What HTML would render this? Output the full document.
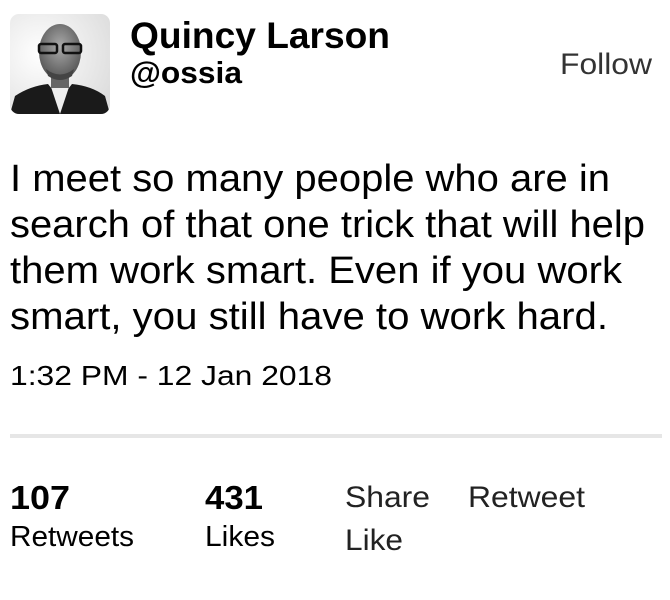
<!DOCTYPE html>
<html><head><style>
body{margin:0;background:#fff;font-family:"Liberation Sans",Arial,sans-serif;width:670px;height:600px;position:relative;overflow:hidden;color:#000}
.a{position:absolute}
</style></head><body>
<svg class="a" style="left:10px;top:14px" width="100" height="100" viewBox="0 0 100 100">
<defs><clipPath id="c"><rect width="100" height="100" rx="9"/></clipPath>
<radialGradient id="bg" cx="0.3" cy="0.4" r="0.8"><stop offset="0" stop-color="#fff"/><stop offset="1" stop-color="#ddd"/></radialGradient>
<radialGradient id="f" cx="0.5" cy="0.4" r="0.6"><stop offset="0" stop-color="#aaa"/><stop offset="1" stop-color="#555"/></radialGradient></defs>
<g clip-path="url(#c)">
<rect width="100" height="100" fill="url(#bg)"/>
<path d="M0 100 L5 82 Q20 72 38 70 L50 85 L62 70 Q82 72 95 82 L100 100Z" fill="#1a1a1a"/>
<path d="M40 70 L50 100 L60 70 Z" fill="#eee"/>
<rect x="41" y="58" width="18" height="16" fill="#666"/>
<ellipse cx="50" cy="38" rx="21" ry="28" fill="url(#f)"/>
<rect x="29" y="30" width="18" height="9" rx="2" fill="none" stroke="#111" stroke-width="2.5"/>
<rect x="53" y="30" width="18" height="9" rx="2" fill="none" stroke="#111" stroke-width="2.5"/>
<path d="M36 55 Q50 66 64 55 L62 62 Q50 70 38 62Z" fill="#444"/>
</g></svg>
<svg class="a" style="left:0;top:0" width="670" height="600" font-family="Liberation Sans, Arial, sans-serif">
<text x="130" y="48" font-size="37" font-weight="bold" textLength="260" lengthAdjust="spacingAndGlyphs">Quincy Larson</text>
<text x="130" y="83" font-size="31" font-weight="bold" textLength="112" lengthAdjust="spacingAndGlyphs">@ossia</text>
<text x="560" y="74" font-size="30" fill="#333" textLength="92" lengthAdjust="spacingAndGlyphs">Follow</text>
<g font-size="38">
<text x="10" y="191" textLength="600" lengthAdjust="spacingAndGlyphs">I meet so many people who are in</text>
<text x="10" y="237" textLength="635" lengthAdjust="spacingAndGlyphs">search of that one trick that will help</text>
<text x="10" y="283" textLength="612" lengthAdjust="spacingAndGlyphs">them work smart. Even if you work</text>
<text x="10" y="329" textLength="598" lengthAdjust="spacingAndGlyphs">smart, you still have to work hard.</text>
</g>
<text x="10" y="385" font-size="28" textLength="322" lengthAdjust="spacingAndGlyphs">1:32 PM - 12 Jan 2018</text>
<rect x="10" y="434" width="652" height="4" fill="#e6e6e6"/>
<text x="10" y="509" font-size="33" font-weight="bold" textLength="60" lengthAdjust="spacingAndGlyphs">107</text>
<text x="10" y="546" font-size="29" textLength="124" lengthAdjust="spacingAndGlyphs">Retweets</text>
<text x="205" y="509" font-size="33" font-weight="bold" textLength="58" lengthAdjust="spacingAndGlyphs">431</text>
<text x="205" y="546" font-size="29" textLength="70" lengthAdjust="spacingAndGlyphs">Likes</text>
<text x="345" y="507" font-size="30" fill="#222" textLength="85" lengthAdjust="spacingAndGlyphs">Share</text>
<text x="468" y="507" font-size="30" fill="#222" textLength="117" lengthAdjust="spacingAndGlyphs">Retweet</text>
<text x="345" y="550" font-size="30" fill="#222" textLength="58" lengthAdjust="spacingAndGlyphs">Like</text>
</svg>
</body></html>
